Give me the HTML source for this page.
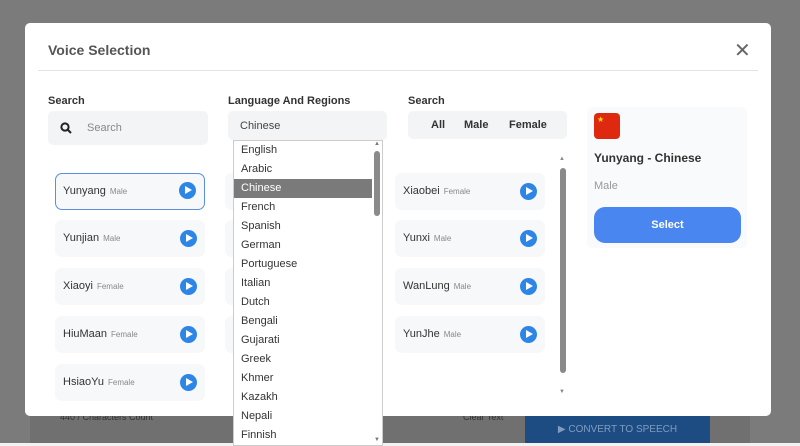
<!DOCTYPE html>
<html><head><meta charset="utf-8"><style>
*{box-sizing:border-box;margin:0;padding:0}
body{width:800px;height:446px;background:#7b7b7b;font-family:"Liberation Sans",sans-serif;position:relative;overflow:hidden}
.a{position:absolute}
.lbl{font-size:11px;font-weight:bold;color:#333}
.card{position:absolute;width:150px;height:37px;background:#f7f8fa;border-radius:7px}
.card .n{position:absolute;left:8px;top:12px;font-size:11px;color:#333}
.card .n small{font-size:8px;color:#888;margin-left:4px}
.play{position:absolute;right:8px;top:10px;width:17px;height:17px;border-radius:50%;background:#2d86e6}
.play:after{content:"";position:absolute;left:6px;top:4px;border-left:7px solid #fff;border-top:4.5px solid transparent;border-bottom:4.5px solid transparent}
.dd div{height:19px;line-height:19px;padding-left:7px;font-size:11px;color:#333}
</style></head><body>
<div class="a" style="left:30px;top:400px;width:720px;height:46px;background:#707070"></div>
<div class="a" style="left:60px;top:412px;font-size:9px;color:#333">440 / Characters Count</div>
<div class="a" style="left:463px;top:412px;font-size:9px;color:#333">Clear Text</div>
<div class="a" style="left:525px;top:413px;width:185px;height:33px;background:#1d4c82;border-radius:4px;color:#7f9cc0;font-size:10px;text-align:center;line-height:33px">▶ CONVERT TO SPEECH</div>
<div class="a" style="left:0;top:443px;width:800px;height:3px;background:#f2f2f2"></div>
<div class="a" style="left:25px;top:23px;width:746px;height:393px;background:#fff;border-radius:5px"></div>
<div class="a" style="left:48px;top:42px;font-size:14px;font-weight:bold;color:#555">Voice Selection</div>
<div class="a" style="left:734px;top:38px;font-size:20px;color:#666">✕</div>
<div class="a" style="left:38px;top:70px;width:720px;height:1px;background:#e3e3e3"></div>
<div class="a lbl" style="left:48px;top:95px">Search</div>
<div class="a lbl" style="left:228px;top:95px">Language And Regions</div>
<div class="a lbl" style="left:408px;top:95px">Search</div>
<div class="a" style="left:48px;top:111px;width:160px;height:34px;background:#f3f4f6;border-radius:5px"></div>
<svg class="a" style="left:60px;top:122px" width="12" height="12"><circle cx="5" cy="5" r="3.6" stroke="#222" stroke-width="2" fill="none"/><path d="M8 8L11 11" stroke="#222" stroke-width="2"/></svg>
<div class="a" style="left:87px;top:122px;font-size:11px;color:#888">Search</div>
<div class="a" style="left:228px;top:111px;width:159px;height:29px;background:#f3f4f6;border-radius:5px;font-size:11px;color:#444;padding:9px 0 0 12px">Chinese</div>
<div class="a" style="left:408px;top:111px;width:159px;height:28px;background:#f3f4f6;border-radius:5px;font-size:11px;color:#333;font-weight:bold"><span class="a" style="left:23px;top:8px">All</span><span class="a" style="left:56px;top:8px">Male</span><span class="a" style="left:101px;top:8px">Female</span></div>
<div class="card" style="left:55px;top:173px;border:1.5px solid #5a8fe0;background:#f7f8fa"><div class="n" style="left:7px;top:11px">Yunyang<small>Male</small></div><div class="play" style="top:8px"></div></div>
<div class="card" style="left:55px;top:220px"><div class="n">Yunjian<small>Male</small></div><div class="play"></div></div>
<div class="card" style="left:55px;top:268px"><div class="n">Xiaoyi<small>Female</small></div><div class="play"></div></div>
<div class="card" style="left:55px;top:316px"><div class="n">HiuMaan<small>Female</small></div><div class="play"></div></div>
<div class="card" style="left:55px;top:364px"><div class="n">HsiaoYu<small>Female</small></div><div class="play"></div></div>
<div class="card" style="left:225px;top:173px;width:20px"></div><div class="card" style="left:225px;top:220px;width:20px"></div><div class="card" style="left:225px;top:268px;width:20px"></div><div class="card" style="left:225px;top:316px;width:20px"></div>
<div class="card" style="left:395px;top:173px"><div class="n">Xiaobei<small>Female</small></div><div class="play"></div></div>
<div class="card" style="left:395px;top:220px"><div class="n">Yunxi<small>Male</small></div><div class="play"></div></div>
<div class="card" style="left:395px;top:268px"><div class="n">WanLung<small>Male</small></div><div class="play"></div></div>
<div class="card" style="left:395px;top:316px"><div class="n">YunJhe<small>Male</small></div><div class="play"></div></div>
<div class="a" style="left:559px;top:156px;font-size:6px;color:#888">▲</div>
<div class="a" style="left:560px;top:168px;width:6px;height:205px;background:#8a8a8a;border-radius:3px"></div>
<div class="a" style="left:559px;top:389px;font-size:6px;color:#888">▼</div>
<div class="a" style="left:587px;top:107px;width:160px;height:141px;background:#f9fafb;border-radius:6px"></div>
<div class="a" style="left:594px;top:113px;width:26px;height:26px;background:#de2910;border-radius:4px;color:#ffde00;font-size:8px;padding:2px 0 0 3px">★</div>
<div class="a" style="left:594px;top:151px;font-size:12px;font-weight:bold;color:#333">Yunyang - Chinese</div>
<div class="a" style="left:594px;top:180px;font-size:11px;color:#999">Male</div>
<div class="a" style="left:594px;top:207px;width:147px;height:36px;background:#4a86f0;border-radius:11px;color:#fff;font-size:11px;font-weight:bold;text-align:center;line-height:36px">Select</div>
<div class="a dd" style="left:233px;top:140px;width:150px;height:306px;background:#fff;border:1px solid #ccc;padding-top:0">
<div>English</div><div>Arabic</div><div style="background:#7a7a7a;color:#fff;margin-right:10px">Chinese</div><div>French</div><div>Spanish</div><div>German</div><div>Portuguese</div><div>Italian</div><div>Dutch</div><div>Bengali</div><div>Gujarati</div><div>Greek</div><div>Khmer</div><div>Kazakh</div><div>Nepali</div><div>Finnish</div>
</div>
<div class="a" style="left:374px;top:141px;font-size:6px;color:#777">▲</div>
<div class="a" style="left:374px;top:151px;width:6px;height:65px;background:#8a8a8a;border-radius:3px"></div>
<div class="a" style="left:374px;top:437px;font-size:6px;color:#777">▼</div>
</body></html>
